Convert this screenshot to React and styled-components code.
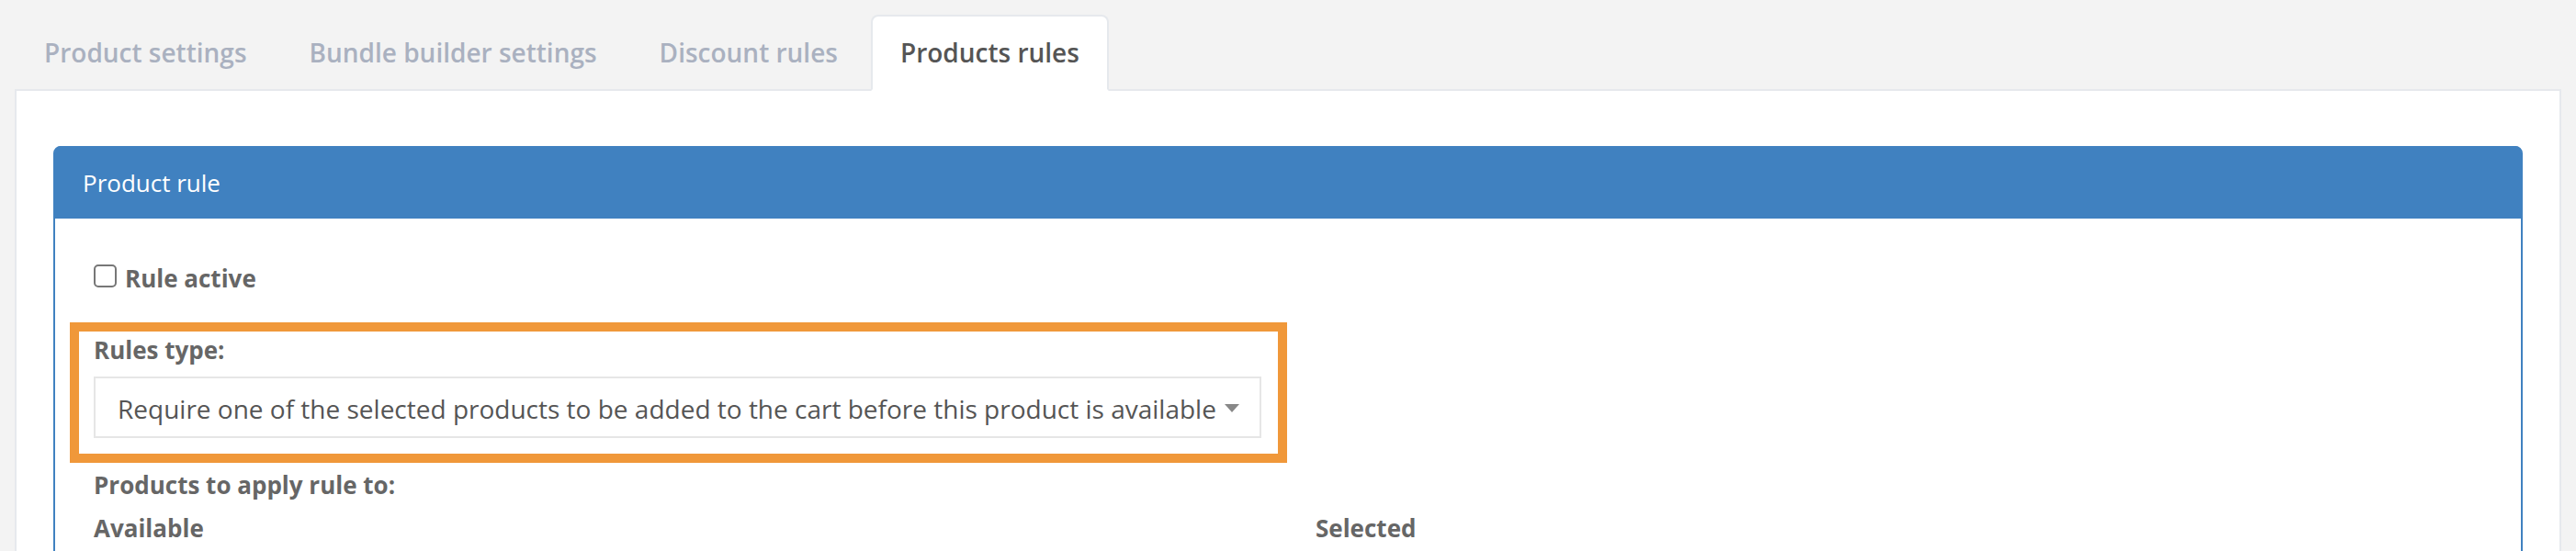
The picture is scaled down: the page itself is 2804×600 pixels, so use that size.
import React from "react";
import styled, { createGlobalStyle } from "styled-components";

const GlobalStyle = createGlobalStyle`
  body {
    margin: 0;
    background-color: #f3f3f3;
    font-family: "Open Sans", "Liberation Sans", sans-serif;
  }
`;

const tabs = [
  { label: "Product settings" },
  { label: "Bundle builder settings" },
  { label: "Discount rules" },
  { label: "Products rules", active: true },
];

const App = () => {
  return (
    <>
      <GlobalStyle />
      <Page>
        <TabBar>
          {tabs.map((tab) => (
            <Tab key={tab.label} $active={tab.active}>
              {tab.label}
            </Tab>
          ))}
        </TabBar>
        <Panel>
          <Card>
            <CardHeader>Product rule</CardHeader>
            <CardBody>
              <CheckRow>
                <Checkbox type="checkbox" />
                <BoldLabel>Rule active</BoldLabel>
              </CheckRow>
              <Highlight>
                <BoldLabel>Rules type:</BoldLabel>
                <Select>
                  <span>
                    Require one of the selected products to be added to the
                    cart before this product is available
                  </span>
                  <svg width="16" height="9" viewBox="0 0 16 9">
                    <path d="M0 0h16L8 9z" fill="#888" />
                  </svg>
                </Select>
              </Highlight>
              <BoldLabel>Products to apply rule to:</BoldLabel>
              <Columns>
                <BoldLabel>Available</BoldLabel>
                <BoldLabel>Selected</BoldLabel>
              </Columns>
            </CardBody>
          </Card>
        </Panel>
      </Page>
    </>
  );
};

const Page = styled.div`
  padding: 0 16px;
`;

const TabBar = styled.div`
  display: flex;
  gap: 4px;
  padding-top: 16px;
`;

const Tab = styled.div`
  position: relative;
  z-index: 1;
  box-sizing: border-box;
  height: 83px;
  margin-bottom: -2px;
  padding: 19px 30px 0;
  font-size: 28px;
  line-height: 40px;
  font-weight: 600;
  color: ${(p) => (p.$active ? "#555555" : "#aab1c0")};
  background-color: ${(p) => (p.$active ? "#ffffff" : "transparent")};
  border: 2px solid ${(p) => (p.$active ? "#e6e9ed" : "transparent")};
  border-bottom-color: ${(p) => (p.$active ? "#ffffff" : "transparent")};
  border-radius: 8px 8px 0 0;
`;

const Panel = styled.div`
  min-height: 560px;
  padding: 60px 40px 0;
  background-color: #ffffff;
  border: 2px solid #e6e9ed;
`;

const Card = styled.div`
  border: 2px solid #4081c0;
  border-radius: 8px 8px 0 0;
  min-height: 480px;
`;

const CardHeader = styled.div`
  display: flex;
  align-items: center;
  height: 79px;
  padding: 0 30px;
  margin-top: -2px;
  background-color: #4081c0;
  border-radius: 6px 6px 0 0;
  color: #ffffff;
  font-size: 26px;
  line-height: 36px;
`;

const CardBody = styled.div`
  display: flex;
  flex-direction: column;
  align-items: flex-start;
  padding: 47px 42px 0;
`;

const CheckRow = styled.label`
  display: flex;
  align-items: center;
  gap: 9px;
`;

const Checkbox = styled.input`
  appearance: none;
  box-sizing: border-box;
  width: 25px;
  height: 25px;
  margin: 0 0 5px;
  border: 2px solid #777777;
  border-radius: 5px;
  background-color: #ffffff;
`;

const BoldLabel = styled.div`
  font-size: 26px;
  line-height: 36px;
  font-weight: 700;
  color: #666666;
`;

const Highlight = styled.div`
  display: flex;
  flex-direction: column;
  align-items: flex-start;
  gap: 11px;
  margin: 30px 0 6px -26px;
  padding: 2px 18px 17px 16px;
  border: 10px solid #f0983a;
`;

const Select = styled.div`
  display: flex;
  align-items: center;
  gap: 9px;
  box-sizing: border-box;
  height: 67px;
  padding: 2px 22px 0 24px;
  border: 2px solid #e6e6e6;
  font-size: 28px;
  line-height: 38px;
  color: #555555;
  white-space: nowrap;
`;

const Columns = styled.div`
  display: grid;
  grid-template-columns: 1fr 1fr;
  column-gap: 60px;
  align-self: stretch;
  margin-top: 11px;
`;

export default App;
